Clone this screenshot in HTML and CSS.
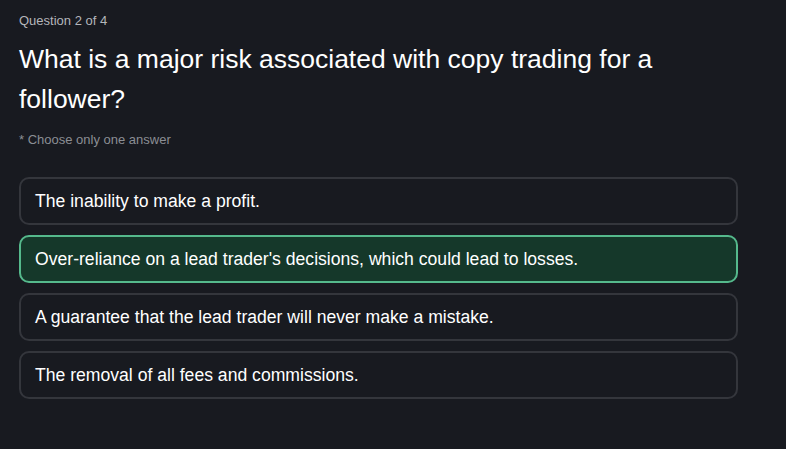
FILE: index.html
```html
<!DOCTYPE html>
<html lang="en">
<head>
<meta charset="utf-8">
<title>Quiz</title>
<link rel="stylesheet" href="styles.css">
</head>
<body>
<main class="quiz">
  <div class="counter">Question 2 of 4</div>
  <h1 class="question">What is a major risk associated with copy trading for a follower?</h1>
  <div class="hint">* Choose only one answer</div>
  <ul class="options">
    <li class="option">The inability to make a profit.</li>
    <li class="option selected">Over-reliance on a lead trader's decisions, which could lead to losses.</li>
    <li class="option">A guarantee that the lead trader will never make a mistake.</li>
    <li class="option">The removal of all fees and commissions.</li>
  </ul>
</main>
</body>
</html>
```
FILE: styles.css
```css
html, body {
  margin: 0;
  padding: 0;
  background: #181a20;
  height: 100%;
}
body {
  font-family: "Liberation Sans", Arial, sans-serif;
  color: #ffffff;
}
.quiz {
  padding: 12px 19px 0 19px;
  width: 719px;
}
.counter {
  font-size: 13px;
  line-height: 18px;
  color: #b4b6bb;
}
.question {
  margin: 9px 0 0 0;
  font-size: 26.5px;
  line-height: 40px;
  font-weight: 400;
  color: #ffffff;
  width: 670px;
}
.hint {
  margin-top: 11px;
  font-size: 13px;
  line-height: 20px;
  color: #8b8e94;
}
.options {
  list-style: none;
  margin: 27px 0 0 0;
  padding: 0;
  display: flex;
  flex-direction: column;
  gap: 10px;
}
.option {
  border: 2px solid #34363c;
  border-radius: 10px;
  padding: 10px 14px;
  font-size: 17.6px;
  line-height: 24px;
  color: #ffffff;
}
.option.selected {
  background: #15382a;
  border-color: #55b98c;
}
```
